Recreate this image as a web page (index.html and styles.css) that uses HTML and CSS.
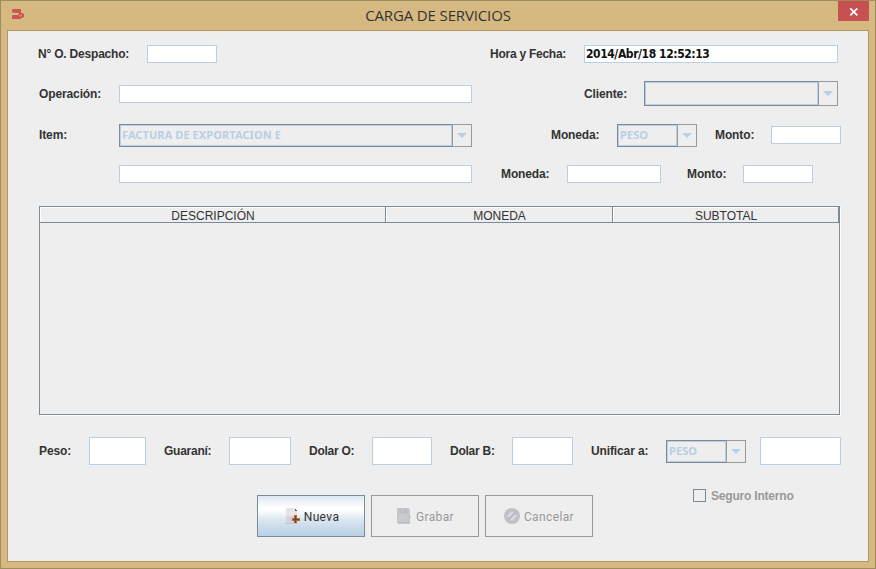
FILE: index.html
```
<!DOCTYPE html>
<html lang="es">
<head>
<meta charset="utf-8">
<title>CARGA DE SERVICIOS</title>
<link rel="stylesheet" href="styles.css">
</head>
<body>
<div class="window">
  <header class="titlebar">
    <svg class="app-icon" width="12" height="10" viewBox="0 0 12 10" shape-rendering="crispEdges"><path fill="#cb5653" d="M0 0h9v4H0zM7 4h4v1H7zM6 5h6v3H6zM0 6h6v4H0zM6 8h5v1H6zM6 9h3v1H6z"/><path fill="#d5796a" d="M0 0h1v1H0zM0 3h3v1H0zM0 6h1v1H0z"/><path fill="#dc9b73" d="M8 5h1v1H8zM7 6h1v1H7zM9 6h1v1H9zM8 7h1v1H8z"/></svg>
    <h1 class="title">CARGA DE SERVICIOS</h1>
    <button class="close" aria-label="Cerrar"><svg width="10" height="8" viewBox="0 0 10 8"><path d="M1.3.4l7 7M8.3.4l-7 7" stroke="#fff" stroke-width="1.7"/></svg></button>
  </header>
  <main class="content">
    <div class="row dispatch">
      <label class="first">N° O. Despacho:</label><div class="field"></div><i></i>
      <label class="tight">Hora y Fecha:</label><div class="field stamp">2014/Abr/18 12:52:13</div>
    </div>
    <div class="row operation">
      <label>Operación:</label><div class="field"></div><i></i>
      <label>Cliente:</label><div class="combo tall"><span></span><b><svg width="10" height="5"><path d="M0 0h10L5 5z"/></svg></b></div>
    </div>
    <div class="row item">
      <label>Item:</label><div class="combo"><span>FACTURA DE EXPORTACION E</span><b><svg width="10" height="5"><path d="M0 0h10L5 5z"/></svg></b></div><i></i>
      <label>Moneda:</label><div class="combo"><span>PESO</span><b><svg width="10" height="5"><path d="M0 0h10L5 5z"/></svg></b></div><i></i>
      <label>Monto:</label><div class="field"></div>
    </div>
    <div class="row detail">
      <i></i><div class="field"></div><i></i>
      <label>Moneda:</label><div class="field"></div><i></i>
      <label>Monto:</label><div class="field"></div>
    </div>
    <div class="table">
      <div class="thead"><div>DESCRIPCIÓN</div><div>MONEDA</div><div>SUBTOTAL</div></div>
    </div>
    <div class="row totals">
      <label>Peso:</label><div class="field"></div><i></i>
      <label class="tight">Guaraní:</label><div class="field"></div><i></i>
      <label class="tight">Dolar O:</label><div class="field"></div><i></i>
      <label class="tight">Dolar B:</label><div class="field"></div><i></i>
      <label>Unificar a:</label><div class="combo"><span>PESO</span><b><svg width="10" height="5"><path d="M0 0h10L5 5z"/></svg></b></div><i></i>
      <div class="field"></div>
    </div>
    <div class="actions">
      <div class="buttons">
        <button class="btn primary"><svg width="16" height="16" viewBox="0 0 16 16" shape-rendering="crispEdges"><path fill="#e5e3e7" d="M2 0h8l3 3v12H2z"/><path fill="#efe3e1" d="M3 4h8v4H3z"/><path fill="#d2d3dc" d="M2 8h9v7H2z"/><path fill="#c5c6cc" d="M1 15h13v1H1z"/><path fill="#59616f" d="M11 1h1v1h1v1h-2z"/><path fill="#a9713f" d="M10 7h3v3h3v3h-3v2h-3v-2H8v-3h2z"/><path fill="#7d4025" d="M11 8h1v3h3v1h-3v3h-1v-3H9v-1h2z"/></svg><span>Nueva</span></button>
        <button class="btn" disabled><svg width="16" height="16" viewBox="0 0 16 16" shape-rendering="crispEdges"><path fill="#c5c7cc" d="M1 0h11l2 2v6h1v2h-1v5l-1 1H2l-1-1z"/><path fill="#b9bcc3" d="M3 1h2v2H3zM7 1h4v3H7zM3 4h9v1H3zM2 14h11v1H2z"/><path fill="#cacbcf" d="M8 1h1v2H8zM3 7h8v7H3z"/></svg><span>Grabar</span></button>
        <button class="btn" disabled><svg width="16" height="16" viewBox="0 0 16 16"><circle cx="8" cy="8" r="8" fill="#bfc2c6"/><circle cx="8" cy="8" r="4.8" fill="#c5c7ca"/><path d="M4.2 8.7L8.7 4.2M7.3 11.8L11.8 7.3" stroke="#e6e6e7" stroke-width="1.4" fill="none"/><path d="M4.6 11.4l6.8-6.8" stroke="#b7babf" stroke-width="1.6"/></svg><span>Cancelar</span></button>
      </div>
      <div class="check"><i class="box"></i><label>Seguro Interno</label></div>
    </div>
  </main>
</div>
</body>
</html>
```
FILE: styles.css
```
* { box-sizing: border-box; }
body { margin: 0; font: 12px "Liberation Sans", Arial, sans-serif; color: #333; }
.window { width: 876px; height: 569px; padding: 0 6px; background: #d5b981; border: 1px solid #a08b61; }
.titlebar { display: grid; grid-template-columns: 31px 1fr 31px; height: 29px; }
.app-icon { margin: 8px 0 0 5px; }
.title { margin: 0; font: 15px/29px "Open Sans", "Segoe UI", sans-serif; letter-spacing: -.14px; text-align: center; color: #333; white-space: nowrap; }
.close { display: flex; align-items: center; justify-content: center; width: 31px; height: 20px; padding: 1px 0 0; border: 0; background: #c75050; }
.content { height: 532px; padding: 0 27px 0 31px; background: #eee; border: 1px solid #b09767; }
.row { display: grid; align-items: center; }
label { font-weight: bold; font-size: 12px; line-height: 16px; letter-spacing: -.12px; white-space: nowrap; }
.first { margin-left: -1px; letter-spacing: -.2px; }
.tight { letter-spacing: -.25px; }
.field { height: 18px; background: #fff; border: 1px solid #b8cfe5; }
.stamp { padding-left: 1px; font: bold 12px/17px "DejaVu Sans Condensed", "DejaVu Sans", sans-serif; letter-spacing: -.42px; color: #111; white-space: nowrap; }
.dispatch { height: 18px; margin-top: 14px; grid-template-columns: 108px 70px 273px 94px 254px; }
.operation { height: 25px; margin-top: 18px; grid-template-columns: 80px 353px 112px 60px 194px; }
.item { height: 23px; margin-top: 18px; grid-template-columns: 80px 353px 79px 66px 80px 18px 56px 70px; }
.item > label, .item > .field { margin-bottom: 1px; }
.detail { height: 18px; margin-top: 18px; grid-template-columns: 80px 353px 29px 66px 94px 26px 56px 70px; }
.combo { display: grid; grid-template-columns: 1fr 20px; height: 23px; }
.tall { height: 25px; }
.combo span { border: 1px solid #7a8a99; border-right: 0; box-shadow: inset 0 0 0 1px #b8cfe5; padding-left: 2px; color: #b8cfe5; font: bold 11px/20px "Noto Sans", Tahoma, sans-serif; letter-spacing: .08px; white-space: nowrap; }
.combo b { display: flex; align-items: center; justify-content: center; border: 1px solid #999; }
.combo path { fill: #b8cfe5; }
.table { width: 801px; height: 209px; margin-top: 23px; border: 1px solid #7a8a99; box-shadow: 1px 1px 0 #fff; }
.thead { display: grid; grid-template-columns: 346px 227px 226px; height: 16px; }
.thead div { height: 16px; padding-left: 1px; border-right: 1px solid #7a8a99; border-bottom: 1px solid #7a8a99; box-shadow: inset 1px 1px 0 #fff; font-size: 12px; line-height: 18px; text-align: center; }
.totals { height: 28px; margin-top: 22px; grid-template-columns: 50px 57px 18px 65px 62px 18px 63px 60px 18px 62px 61px 18px 75px 80px 14px 81px; }
.totals .field { height: 28px; }
.actions { display: flex; margin-top: 24px; padding-left: 218px; }
.buttons { display: flex; gap: 6px; margin-top: 6px; }
.btn { display: flex; align-items: center; justify-content: center; gap: 4px; width: 108px; height: 42px; padding: 0; border: 1px solid #999; background: #eee; font: 12px Roboto, sans-serif; letter-spacing: .38px; color: #999; }
.btn span { margin-top: 1px; }
.primary { padding-left: 1px; border-color: #7a8a99; color: #333; background: linear-gradient(#dde8f3, #fff 30%, #fff 35%, #d9e6ef 60%, #b8cfe5); }
.check { display: flex; gap: 5px; height: 13px; align-items: center; margin-left: 100px; }
.box { width: 13px; height: 13px; border: 1px solid #7a8a99; }
.check label { color: #999; letter-spacing: -.2px; }
```
